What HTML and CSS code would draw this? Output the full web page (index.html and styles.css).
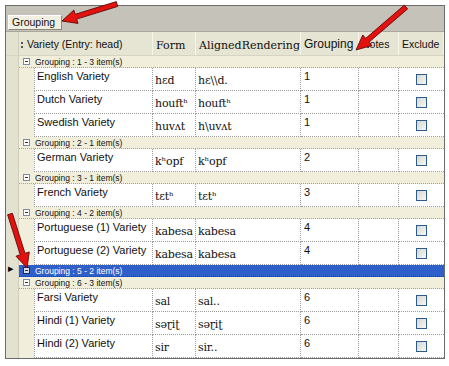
FILE: index.html
```html
<!DOCTYPE html>
<html lang="en">
<head>
    <meta charset="UTF-8">
    <title>Grouping</title>
    <link rel="stylesheet" href="styles.css">
</head>
<body>
    <div class="grid">
        <!-- group-by panel -->
        <div class="group-panel">
            <span class="group-chip">Grouping</span>
        </div>

        <div class="row head">
            <div class="sel"></div>
            <div class="hcell span2"><span class="grip"></span>Variety (Entry: head)</div>
            <div class="hcell serif">Form</div>
            <div class="hcell serif">AlignedRendering</div>
            <div class="hcell big">Grouping</div>
            <div class="hcell">Notes</div>
            <div class="hcell">Exclude</div>
        </div>

        <div class="row group">
            <div class="sel"></div>
            <div class="gcell"><span class="toggle"></span>Grouping : 1 - 3 item(s)</div>
        </div>
        <div class="row data">
            <div class="sel"></div><div class="ind"></div>
            <div class="cell first">English Variety</div>
            <div class="cell serif">hɛd</div>
            <div class="cell serif">hɛ\\d.</div>
            <div class="cell">1</div>
            <div class="cell"></div>
            <div class="cell check"><span class="box"></span></div>
        </div>
        <div class="row data">
            <div class="sel"></div><div class="ind"></div>
            <div class="cell first">Dutch Variety</div>
            <div class="cell serif">houftʰ</div>
            <div class="cell serif">houftʰ</div>
            <div class="cell">1</div>
            <div class="cell"></div>
            <div class="cell check"><span class="box"></span></div>
        </div>
        <div class="row data">
            <div class="sel"></div><div class="ind"></div>
            <div class="cell first">Swedish Variety</div>
            <div class="cell serif">huvʌt</div>
            <div class="cell serif">h\uvʌt</div>
            <div class="cell">1</div>
            <div class="cell"></div>
            <div class="cell check"><span class="box"></span></div>
        </div>

        <div class="row group">
            <div class="sel"></div>
            <div class="gcell"><span class="toggle"></span>Grouping : 2 - 1 item(s)</div>
        </div>
        <div class="row data">
            <div class="sel"></div><div class="ind"></div>
            <div class="cell first">German Variety</div>
            <div class="cell serif">kʰopf</div>
            <div class="cell serif">kʰopf</div>
            <div class="cell">2</div>
            <div class="cell"></div>
            <div class="cell check"><span class="box"></span></div>
        </div>

        <div class="row group">
            <div class="sel"></div>
            <div class="gcell"><span class="toggle"></span>Grouping : 3 - 1 item(s)</div>
        </div>
        <div class="row data">
            <div class="sel"></div><div class="ind"></div>
            <div class="cell first">French Variety</div>
            <div class="cell serif">tɛtʰ</div>
            <div class="cell serif">tɛtʰ</div>
            <div class="cell">3</div>
            <div class="cell"></div>
            <div class="cell check"><span class="box"></span></div>
        </div>

        <div class="row group">
            <div class="sel"></div>
            <div class="gcell"><span class="toggle"></span>Grouping : 4 - 2 item(s)</div>
        </div>
        <div class="row data">
            <div class="sel"></div><div class="ind"></div>
            <div class="cell first">Portuguese (1) Variety</div>
            <div class="cell serif">kabesa</div>
            <div class="cell serif">kabesa</div>
            <div class="cell">4</div>
            <div class="cell"></div>
            <div class="cell check"><span class="box"></span></div>
        </div>
        <div class="row data">
            <div class="sel"></div><div class="ind"></div>
            <div class="cell first">Portuguese (2) Variety</div>
            <div class="cell serif">kabesa</div>
            <div class="cell serif">kabesa</div>
            <div class="cell">4</div>
            <div class="cell"></div>
            <div class="cell check"><span class="box"></span></div>
        </div>

        <div class="row group selected">
            <div class="sel"><span class="pointer">&#9656;</span></div>
            <div class="gcell"><span class="toggle closed"></span>Grouping : 5 - 2 item(s)</div>
        </div>

        <div class="row group">
            <div class="sel"></div>
            <div class="gcell"><span class="toggle"></span>Grouping : 6 - 3 item(s)</div>
        </div>
        <div class="row data">
            <div class="sel"></div><div class="ind"></div>
            <div class="cell first">Farsi Variety</div>
            <div class="cell serif">sal</div>
            <div class="cell serif">sal..</div>
            <div class="cell">6</div>
            <div class="cell"></div>
            <div class="cell check"><span class="box"></span></div>
        </div>
        <div class="row data">
            <div class="sel"></div><div class="ind"></div>
            <div class="cell first">Hindi (1) Variety</div>
            <div class="cell serif">səɽiʈ</div>
            <div class="cell serif">səɽiʈ</div>
            <div class="cell">6</div>
            <div class="cell"></div>
            <div class="cell check"><span class="box"></span></div>
        </div>
        <div class="row data">
            <div class="sel"></div><div class="ind"></div>
            <div class="cell first">Hindi (2) Variety</div>
            <div class="cell serif">sir</div>
            <div class="cell serif">sir..</div>
            <div class="cell">6</div>
            <div class="cell"></div>
            <div class="cell check"><span class="box"></span></div>
        </div>
    </div>

    <!-- red callout arrows drawn over the screenshot -->
    <svg class="arrows" viewBox="0 0 449 366" xmlns="http://www.w3.org/2000/svg">
        <g transform="translate(117 4) rotate(162.8)">
            <polygon points="0,-2.5 43,-2.5 43,-7 57.6,0 43,7 43,2.5 0,2.5" />
        </g>
        <g transform="translate(406 7) rotate(139.3)">
            <polygon points="0,-2.5 51,-2.5 51,-7 65.9,0 51,7 51,2.5 0,2.5" />
        </g>
        <g transform="translate(10 214) rotate(72.5)">
            <polygon points="0,-2.5 42,-2.5 42,-7 56.6,0 42,7 42,2.5 0,2.5" />
        </g>
    </svg>
</body>
</html>
```
FILE: styles.css
```css
body {
    margin: 0;
    background: white;
    font-family: "Liberation Sans", Arial, sans-serif;
    color: #111;
}

.grid {
    position: relative;
    margin: 5px 0 0 5px;
    width: 440px;
    border: 1px solid #6b6b6b;
    box-sizing: border-box;
    background: #fff;
}

/* Group-by panel */
.group-panel {
    height: 26px;
    background: #c4c2b9;
    border-bottom: 1px solid #a9a79c;
    box-sizing: border-box;
    padding: 6px 0 0 2px;
}

.group-chip {
    display: inline-block;
    width: 54px;
    height: 15px;
    box-sizing: border-box;
    background: #f1efe2;
    border: 1px solid #fff;
    border-right-color: #8a887e;
    border-bottom-color: #8a887e;
    font-size: 10.5px;
    line-height: 13px;
    padding-left: 3px;
}

/* Rows */
.row {
    display: grid;
    grid-template-columns: 13px 15px 119px 43px 105px 58px 40px 45px;
}

.sel {
    background: #e3e1d0;
    border-right: 1px solid #cfcdbb;
    box-sizing: border-box;
    position: relative;
}

.head {
    height: 24px;
    background: #e6e4d2;
    border-bottom: 1px solid #d6d4c2;
    box-sizing: border-box;
}

.hcell {
    display: flex;
    align-items: center;
    padding-left: 3px;
    font-size: 10.5px;
    white-space: nowrap;
    overflow: hidden;
    border-right: 1px solid #f6f5ea;
    box-sizing: border-box;
}

.hcell.span2 {
    grid-column: span 2;
    padding-left: 2px;
}

.hcell.big {
    font-size: 12px;
}

.grip {
    width: 0;
    height: 6px;
    border-left: 2px dotted #555;
    margin: 3px 4px 0 0;
}

.serif {
    font-family: "DejaVu Serif", "Liberation Serif", serif;
    font-size: 11px;
    letter-spacing: -0.2px;
}

.hcell.serif {
    font-size: 11px;
    padding-top: 3px;
    letter-spacing: 0;
}

/* Group rows */
.group {
    height: 12px;
}

.gcell {
    grid-column: 2 / -1;
    display: flex;
    align-items: center;
    background: #f1efdb;
    border-bottom: 1px dotted #a5a396;
    box-sizing: border-box;
    font-size: 8.5px;
    white-space: nowrap;
}

.toggle {
    position: relative;
    width: 7px;
    height: 7px;
    box-sizing: border-box;
    margin: 0 5px 0 4px;
    border: 1px solid #7d8aa6;
    background: #fff;
}

.toggle::after {
    content: "";
    position: absolute;
    left: 1px;
    top: 2px;
    width: 3px;
    height: 1px;
    background: #333;
}

.toggle.closed {
    border-color: #1a2d5a;
    background: #d9dce6;
}

.selected .gcell {
    background: #2f5fc9;
    color: #fff;
    border-bottom-color: #1d3f8f;
}

.pointer {
    position: absolute;
    left: 2px;
    top: -3px;
    font-size: 11px;
    color: #000;
}

/* Data rows */
.data {
    height: 23px;
}

.ind {
    background: #f1efdb;
}

.cell {
    background: #fff;
    border-right: 1px dotted #9c9c9c;
    border-bottom: 1px dotted #9c9c9c;
    box-sizing: border-box;
    padding: 2px 0 0 3px;
    font-size: 11px;
    white-space: nowrap;
    overflow: hidden;
}

.cell.first {
    border-left: 1px dotted #9c9c9c;
    padding-left: 2px;
}

.cell.serif {
    padding-top: 6px;
    padding-left: 2px;
}

.cell.check {
    border-right: none;
    display: flex;
    justify-content: center;
    padding: 6px 0 0 0;
}

.box {
    width: 11px;
    height: 11px;
    box-sizing: border-box;
    border: 1px solid #2c5c8c;
    background: linear-gradient(135deg, #d6d6d0, #f8f8f4);
}

/* Callout arrows */
.arrows {
    position: absolute;
    top: 0;
    left: 0;
    width: 449px;
    height: 366px;
    pointer-events: none;
}

.arrows polygon {
    fill: #e3120f;
    stroke: #5a0a0a;
    stroke-width: 0.8;
}
```
